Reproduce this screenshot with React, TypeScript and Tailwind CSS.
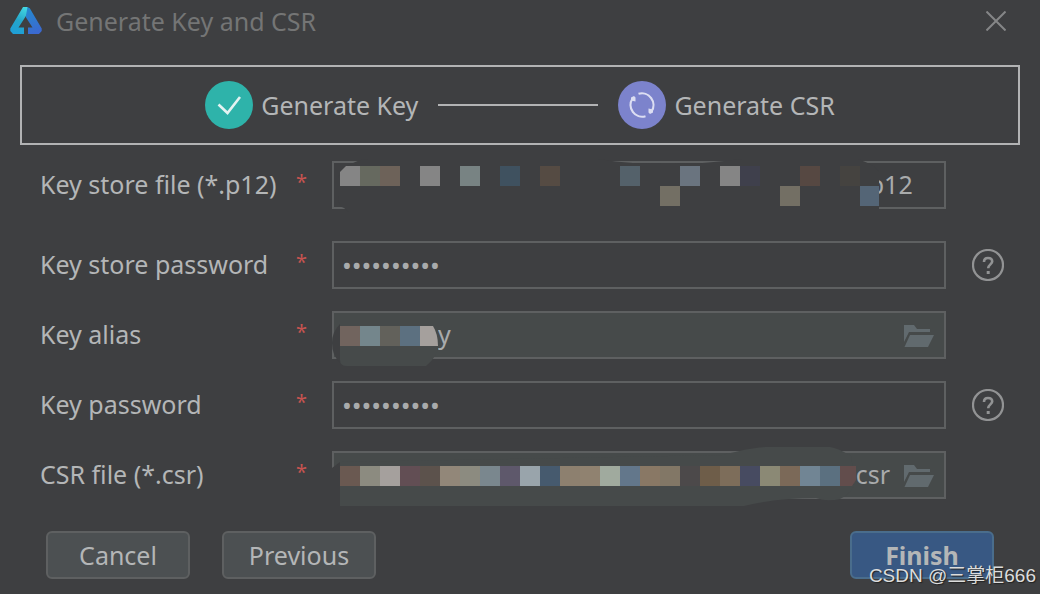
import type { ReactNode } from "react";

const PAGE = "#3e3f41";
const FIELD = "#464a4a";

type Tile = [x: number, y: number, width: number, color: string];

function Tiles({ tiles }: { tiles: Tile[] }) {
  return (
    <>
      {tiles.map(([x, y, width, color]) => (
        <rect key={`${x}-${y}`} x={x} y={y} width={width} height={20} fill={color} />
      ))}
    </>
  );
}

function Logo() {
  return (
    <svg className="h-8 w-8" viewBox="0 0 32 32" fill="none" aria-hidden="true">
      <defs>
        <linearGradient id="logoLeft" x1="17" y1="2" x2="5" y2="28" gradientUnits="userSpaceOnUse">
          <stop stopColor="#45dbe4" />
          <stop offset="0.55" stopColor="#25a5c9" />
          <stop offset="1" stopColor="#1f9fd6" />
        </linearGradient>
        <linearGradient id="logoRight" x1="18" y1="4" x2="28" y2="28" gradientUnits="userSpaceOnUse">
          <stop stopColor="#2588cf" />
          <stop offset="1" stopColor="#3c68d0" />
        </linearGradient>
      </defs>
      <path d="M13 2H17.500L19.500 5.500L8.500 22.500H14V29H3L0.300 26V23.500Z" fill="url(#logoLeft)" />
      <path d="M17.500 2L19.800 3.300L31.700 23.500V26L29 29H18V22.500H22.500L15.700 12Z" fill="url(#logoRight)" />
    </svg>
  );
}

function HelpIcon() {
  return (
    <svg className="h-8 w-8" viewBox="0 0 32 32" fill="none" stroke="#929394" aria-hidden="true">
      <circle cx="16" cy="16" r="15" strokeWidth="2.200" />
      <path d="M12 12.900C12 10.300 13.500 9 16 9C18.600 9 20.200 10.300 20.200 12.500C20.200 15.200 16.200 15.700 16.200 19.300" strokeWidth="2.600" />
      <path d="M16.200 22V25" strokeWidth="3" />
    </svg>
  );
}

function FolderIcon() {
  return (
    <svg className="h-6 w-8" viewBox="0 0 32 24" fill="#616a6e" aria-hidden="true">
      <path d="M1 2H11L14 6H27V9H6L1 19Z" />
      <path d="M7 12H31L25 24H1.500Z" />
    </svg>
  );
}

const storeTiles: Tile[] = [
  [28, 14, 20, "#66695f"],
  [48, 14, 20, "#6d6259"],
  [88, 14, 20, "#858585"],
  [128, 14, 20, "#788383"],
  [168, 14, 20, "#3f515f"],
  [208, 14, 20, "#554b43"],
  [288, 14, 20, "#54616a"],
  [348, 14, 20, "#6a747f"],
  [388, 14, 20, "#858585"],
  [408, 14, 20, "#3f404c"],
  [468, 14, 20, "#564842"],
  [508, 14, 20, "#454340"],
  [328, 34, 20, "#736f64"],
  [448, 34, 20, "#736f64"],
  [528, 34, 19, "#546576"],
];

const aliasTiles: Tile[] = [
  [8, 24, 20, "#71645e"],
  [28, 24, 20, "#74868c"],
  [48, 24, 20, "#62615b"],
  [68, 24, 20, "#5c7080"],
];

const csrColors = [
  "#6a5951", "#8c8b80", "#a5a09d", "#624e54", "#5c524c", "#928779", "#8c8b80", "#7a878e",
  "#5e586b", "#99a4ab", "#465a6e", "#8d806f", "#908270", "#a0aa9e", "#63778b", "#897865",
  "#827766", "#4c494a", "#6e5d49", "#7d6d5a", "#474b61", "#8b8975", "#7b6958", "#718594",
  "#5b7080",
];

const csrTiles: Tile[] = csrColors.map((color, i) => [8 + i * 20, 24, 20, color]);

function StoreMask() {
  return (
    <svg className="pointer-events-none absolute -top-[9px] left-0" width="560" height="68" viewBox="0 0 560 68" aria-hidden="true">
      <path
        d="M17 13C24 9 30 7 36 7H266C290 11 310 12 342 12C370 12 390 9 410 7H526C536 11 542 13 547 20V60H17L12 56Q6 54 6 44V26Q8 19 17 13Z"
        fill={PAGE}
      />
      <path d="M8 20L14 14H28V34H8Z" fill="#858585" />
      <Tiles tiles={storeTiles} />
    </svg>
  );
}

function AliasMask() {
  return (
    <svg className="pointer-events-none absolute -top-[9px] left-0" width="120" height="68" viewBox="0 0 120 68" aria-hidden="true">
      <path d="M8 22Q0 30 0 41Q0 53 8 61Z" fill={PAGE} />
      <path d="M8 16H95Q106 26 106 44Q106 54 94 64H15Q8 64 8 58Z" fill={FIELD} />
      <Tiles tiles={aliasTiles} />
      <path d="M88 24H101Q106 32 106 44H88Z" fill="#a5a09d" />
    </svg>
  );
}

function CsrMask() {
  return (
    <svg className="pointer-events-none absolute -top-[9px] left-0" width="540" height="68" viewBox="0 0 540 68" aria-hidden="true">
      <path d="M0 26L8 20V64H0Z" fill={PAGE} />
      <path
        d="M8 20L390 13C410 8 422 5 438 5H498Q506 6 519 14L523 40Q520 52 508 57Q495 60 484 56C460 56 436 58 412 64H8Z"
        fill={FIELD}
      />
      <Tiles tiles={csrTiles} />
      <path d="M508 24H524V38L520 44H508Z" fill="#624d4c" />
    </svg>
  );
}

type FieldProps = {
  id: string;
  label: string;
  value: string;
  type?: "text" | "password";
  inputClass: string;
  browse?: boolean;
  help?: boolean;
  children?: ReactNode;
};

function Field({ id, label, value, type = "text", inputClass, browse, help, children }: FieldProps) {
  return (
    <div className="flex h-12 items-center">
      <label htmlFor={id} className="flex w-[292px] shrink-0 items-start pb-0.5">
        <span className="w-64 leading-8">{label}</span>
        <span className="text-xl leading-7 text-[#c75450]">*</span>
      </label>
      <div className="relative min-w-0 flex-1">
        <input
          id={id}
          type={type}
          defaultValue={value}
          autoComplete="off"
          className={`block h-12 w-full border-2 border-[#5e6061] text-[#a9abac] outline-none ${inputClass}`}
        />
        {children}
        {browse && (
          <button type="button" aria-label={`Browse ${label}`} className="absolute top-3 right-[11px]">
            <FolderIcon />
          </button>
        )}
      </div>
      <div className="flex w-[58px] shrink-0 justify-end">
        {help && (
          <button type="button" aria-label={`Help for ${label}`}>
            <HelpIcon />
          </button>
        )}
      </div>
    </div>
  );
}

export default function App() {
  return (
    <main className="relative min-h-screen bg-[#3e3f41] font-['Noto_Sans','Noto_Sans_CJK_SC',sans-serif] text-[25px] text-[#b4b6b7]">
      <header className="flex h-[42px] items-center justify-between pr-[34px] pl-2.5 text-[#747575]">
        <div className="flex items-center gap-3.5">
          <Logo />
          <h1 className="pt-0.5">Generate Key and CSR</h1>
        </div>
        <button type="button" aria-label="Close">
          <svg className="h-5 w-5" viewBox="0 0 20 20" stroke="#858687" strokeWidth="2" aria-hidden="true">
            <path d="M0.500 0.500L19.500 19.500M19.500 0.500L0.500 19.500" />
          </svg>
        </button>
      </header>

      <ol className="mx-5 mt-[23px] flex h-20 items-center justify-center gap-5 border-2 border-[#b2b3b4]">
        <li className="flex items-center gap-2">
          <svg className="h-12 w-12" viewBox="0 0 48 48" fill="none" aria-hidden="true">
            <circle cx="24" cy="24" r="24" fill="#2eb3aa" />
            <path d="M13.500 23.500L22.500 32L35 16" stroke="#e3f3f2" strokeWidth="2.600" />
          </svg>
          <span className="pt-0.5">Generate Key</span>
        </li>
        <li aria-hidden="true" className="h-0.5 w-40 bg-[#b2b3b4]" />
        <li className="flex items-center gap-2">
          <svg className="h-12 w-12" viewBox="0 0 48 48" fill="none" aria-hidden="true">
            <circle cx="24" cy="24" r="24" fill="#7c83cc" />
            <g stroke="#dcdef2" strokeWidth="2.200">
              <path d="M20.500 12.800A11.700 11.700 0 0 1 33.500 30.500" />
              <path d="M27.500 35.200A11.700 11.700 0 0 1 14.500 17.500" />
            </g>
            <path d="M30.500 27.500L35 28.500V31.500L32 33L30.500 31.500Z" fill="#dcdef2" />
            <path d="M17.500 20.500L13 19.500V16.500L16 15L17.500 16.500Z" fill="#dcdef2" />
          </svg>
          <span className="pt-0.5">Generate CSR</span>
        </li>
      </ol>

      <form className="pt-4" onSubmit={(event) => event.preventDefault()}>
        <div className="flex flex-col gap-[22px] pr-9 pl-10">
          <div className="pb-2.5">
            <Field id="store-file" label="Key store file (*.p12)" value=".p12" inputClass="bg-[#3e3f41] pb-0.5 pl-[528px] pr-2">
              <StoreMask />
            </Field>
          </div>
          <Field id="store-password" label="Key store password" type="password" value="keystore12" inputClass="bg-[#3e3f41] pl-2 text-[26px]" help />
          <Field id="alias" label="Key alias" value="y" inputClass="bg-[#464a4a] pb-0.5 pl-[104px] pr-12" browse>
            <AliasMask />
          </Field>
          <Field id="key-password" label="Key password" type="password" value="keystore12" inputClass="bg-[#3e3f41] pl-2 text-[26px]" help />
          <Field id="csr-file" label="CSR file (*.csr)" value=".csr" inputClass="bg-[#464a4a] pb-0.5 pl-[515px] pr-12" browse>
            <CsrMask />
          </Field>
        </div>

        <div className="flex items-center gap-8 px-[46px] pt-8 pb-2">
          <button type="button" className="h-12 w-36 rounded-md border-2 border-[#5e6061] bg-[#4c5052] pt-0.5">
            Cancel
          </button>
          <button type="button" className="h-12 w-[154px] rounded-md border-2 border-[#5e6061] bg-[#4c5052] pt-0.5">
            Previous
          </button>
          <button type="submit" className="ml-auto h-12 w-36 rounded-md border-2 border-[#4a6d8c] bg-[#385883] pt-0.5 font-bold">
            Finish
          </button>
        </div>
      </form>

      <p className="absolute right-1 bottom-1 font-['Liberation_Sans','Noto_Sans_CJK_SC',sans-serif] text-[19px] leading-7 text-[#dcdddd] [text-shadow:1px_1px_1px_#222]">
        CSDN @三掌柜666
      </p>
    </main>
  );
}
